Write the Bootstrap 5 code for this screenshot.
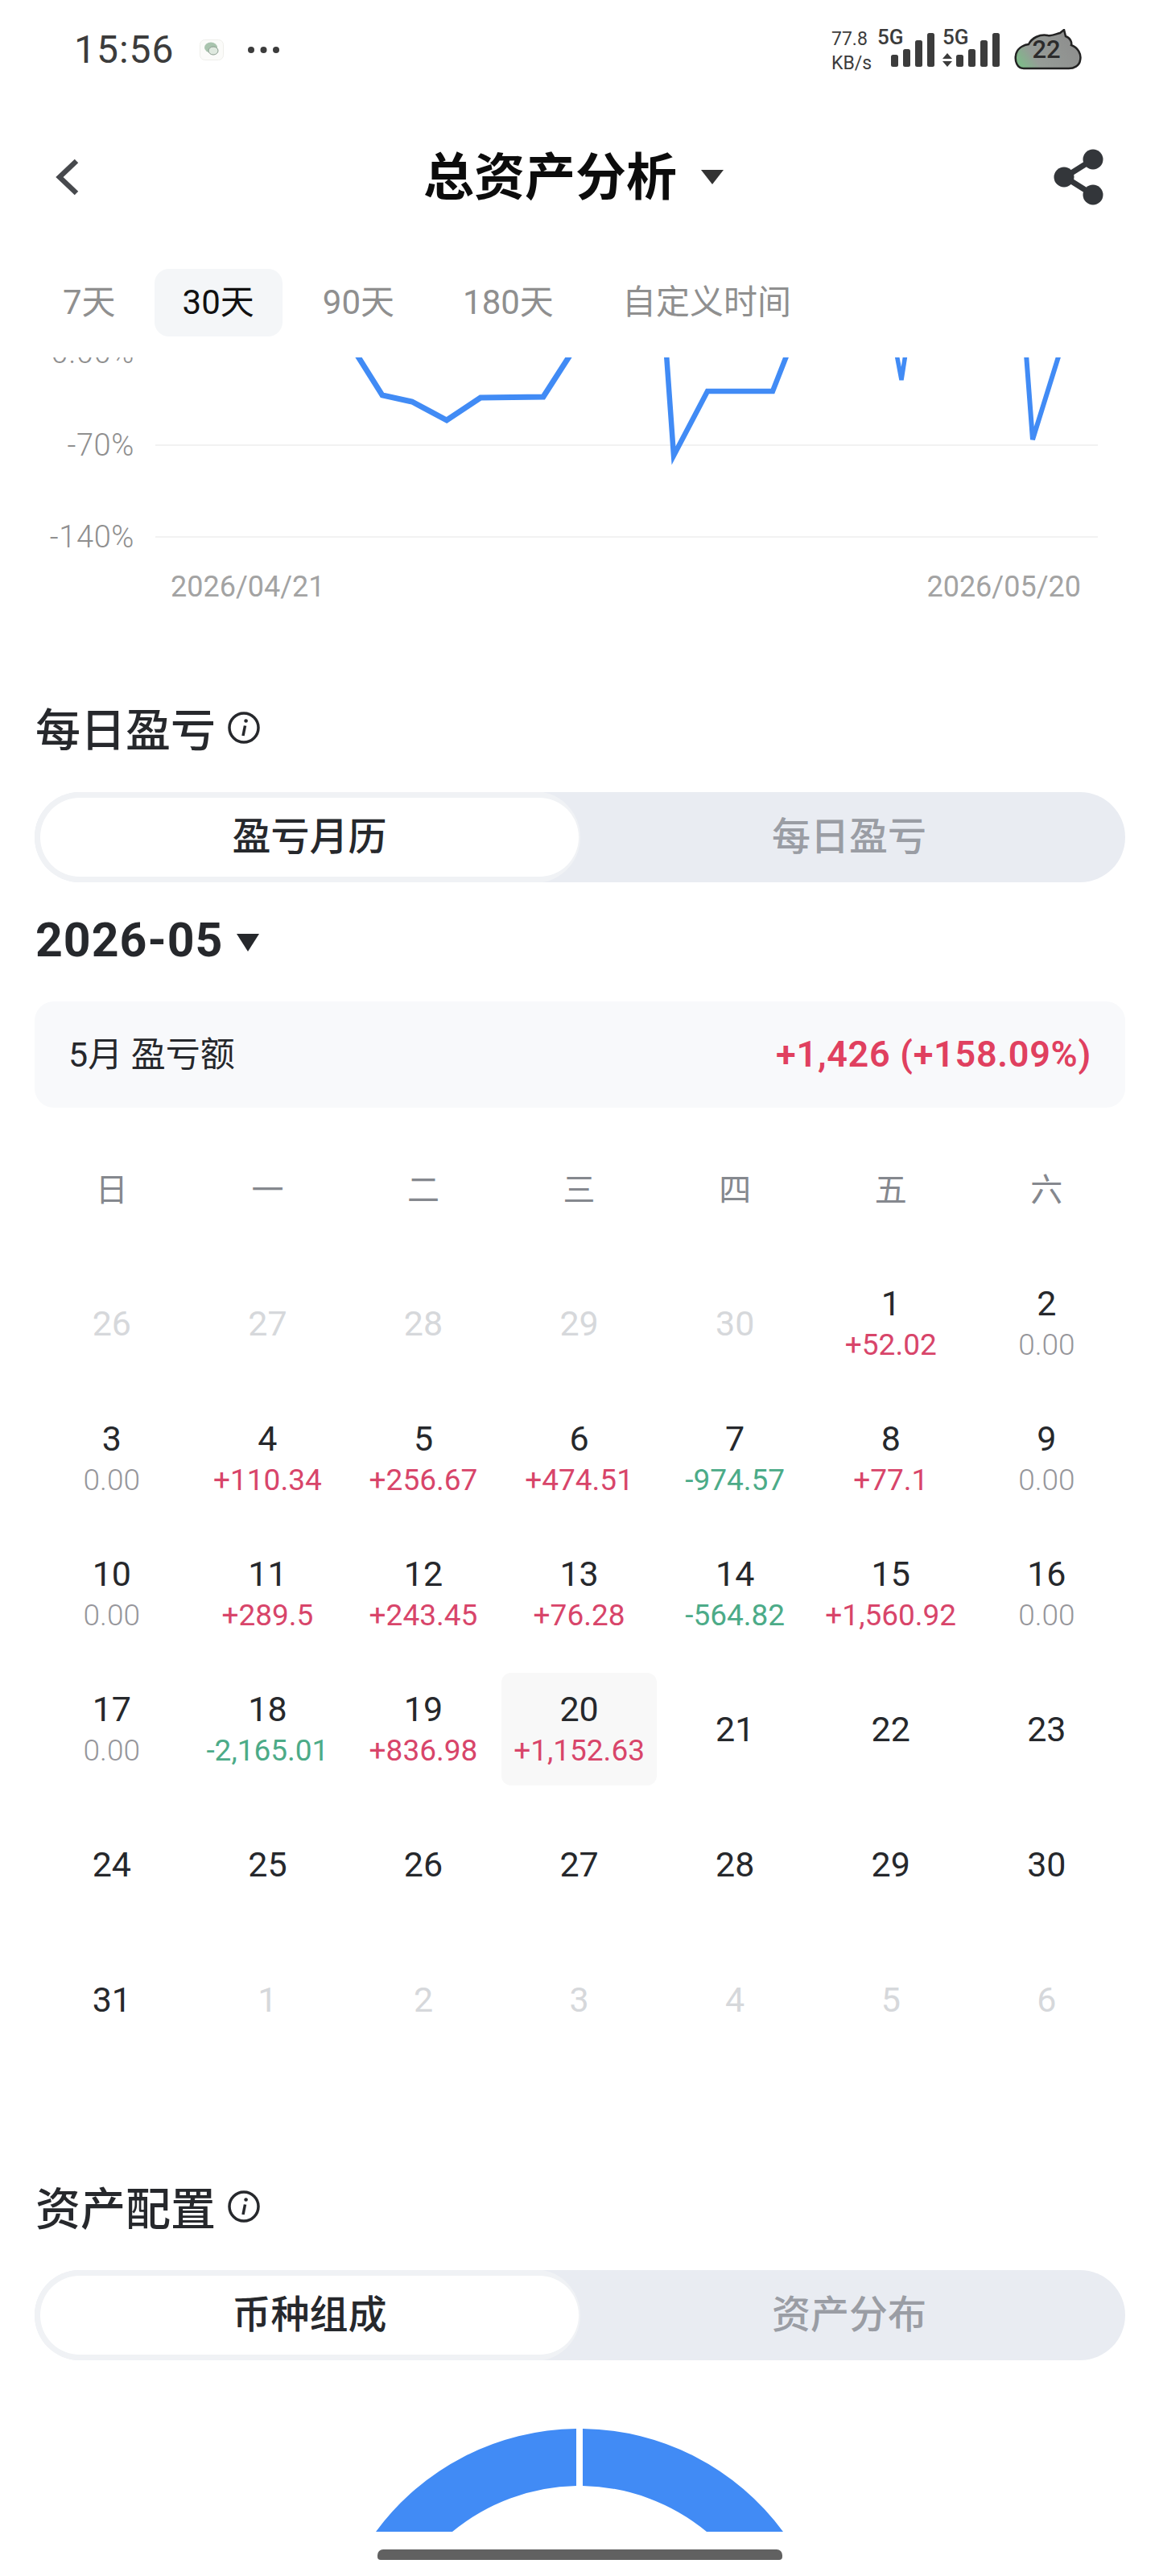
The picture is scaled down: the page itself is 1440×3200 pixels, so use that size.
<!DOCTYPE html>
<html lang="zh-CN">
<head>
    <meta charset="UTF-8">
    <meta name="viewport" content="width=device-width, initial-scale=1.0">
    <title>总资产分析</title>
    <link href="https://cdn.jsdelivr.net/npm/bootstrap@5.3.0/dist/css/bootstrap.min.css" rel="stylesheet">
    <style>
        body { font-family: Roboto, "Noto Sans CJK SC", sans-serif; color: #26282c; background: #fff; }
        .page-wrap { width: 1440px; height: 3200px; overflow: hidden; }
        .status-row { height: 124px; padding: 0 96px 0 92px; }
        .status-time { font-size: 48px; color: #3c3c3c; line-height: 1; letter-spacing: 1px; width: 156px; }
        .status-dots { width: 41px; margin-left: 29px; }
        .status-right { height: 52px; }
        .net-group { height: 46px; margin-top: 1px; }
        .net-speed { width: 57px; font-size: 23px; line-height: 30px; color: #3c3c3c; margin-top: -3px; }
        .net-g { width: 32px; font-size: 26px; font-weight: 500; line-height: 18px; color: #3c3c3c; }
        .net-bars { margin-left: -15px; }
        .net-arrows { width: 32px; }
        .head-row { height: 192px; padding: 0 66px 0 66px; }
        .head-title { font-size: 63px; font-weight: 700; color: #0c0c0c; line-height: 1; margin-left: 19px; margin-right: 30px; }
        .range-row { margin-top: 18px; height: 84px; padding-left: 43px; gap: 15px; }
        .range-item { padding: 0 35px; height: 84px; line-height: 84px; font-size: 42px; color: #8f8f8f; border-radius: 18px; white-space: nowrap; }
        .range-first { padding-right: 33px; }
        .range-on { background: #f4f6f8; color: #111; }
        .chart-box { margin-top: 26px; height: 429px; overflow: hidden; }
        .chart-label { font-size: 36px; fill: #a3a3a3; font-family: Roboto, sans-serif; }
        .chart-axis { font-size: 38px; letter-spacing: 0.6px; font-weight: 300; fill: #8f8f8f; }
        .sec-title { height: 70px; padding-left: 44px; font-size: 56px; line-height: 70px; font-weight: 500; gap: 14px; }
        .seg-track { margin: 41px 42px 0 43px; height: 112px; padding: 7px; border-radius: 56px; background: #e9ecf2; overflow: hidden; }
        .seg-on { flex: 0 0 669px; height: 98px; background: #fff; border-radius: 49px; box-shadow: -6px 0 0 8px #f0f2f5; line-height: 98px; font-size: 48px; font-weight: 500; text-align: center; color: #26282c; position: relative; }
        .seg-off { flex: 1 1 auto; line-height: 98px; font-size: 48px; font-weight: 500; text-align: center; color: #9a9da4; }
        .month-row { margin-top: 37px; height: 70px; padding-left: 44px; font-size: 59px; font-weight: 700; line-height: 70px; gap: 17px; letter-spacing: 1px; }
        .month-row svg { margin-top: 6px; }
        .sum-card { margin: 41px 42px 0 43px; height: 132px; padding: 0 42px; background: #f8f9fb; border-radius: 24px; font-size: 43px; }
        .sum-val { font-weight: 600; color: #e0405f; font-size: 45px; letter-spacing: 0.7px; }
        .cal-grid { grid-template-columns: repeat(7, 193.6px); margin-left: 42px; }
        .cal-week { margin-top: 73px; height: 60px; }
        .cal-week div { text-align: center; font-size: 40px; line-height: 60px; color: #85888e; }
        .cal-days { margin-top: 65px; row-gap: 28px; }
        .cal-cell { height: 140px; display: flex; flex-direction: column; justify-content: center; align-items: center; border-radius: 12px; }
        .cal-num { font-size: 43px; line-height: 50px; color: #26282c; }
        .cal-val { font-size: 37px; line-height: 50px; margin-top: 2px; margin-bottom: -2px; font-weight: 300; color: #96969b; white-space: nowrap; }
        .cal-dim .cal-num { color: #d6d8db; }
        .cal-today { background: #f8f8f8; }
        .val-up { color: #d8456a; font-weight: 400; }
        .val-down { color: #4cab88; font-weight: 400; }
        .sec-two { margin-top: 156px; }
        .seg-two { margin-top: 40px; }
        .donut-box { margin-top: 85px; height: 128px; }
        .home-bar { width: 503px; height: 13px; margin: 22px auto 0; background: #616161; border-radius: 7px 7px 4px 4px; }
    </style>
</head>
<body>
<div class="page-wrap">

    <!-- status bar -->
    <div class="status-row d-flex align-items-center">
        <div class="status-time">15:56</div>
        <svg width="30" height="26" viewBox="0 0 30 26">
            <rect x="0.5" y="0.5" width="29" height="25" rx="6" fill="#fbfbf9" stroke="#eeeeea"/>
            <ellipse cx="14" cy="10" rx="8" ry="6.5" fill="#a9c4ae"/>
            <ellipse cx="17" cy="14" rx="6" ry="5" fill="#dfe9df" stroke="#8b9d8f"/>
        </svg>
        <svg class="status-dots" width="41" height="10" viewBox="0 0 41 10">
            <circle cx="5" cy="5" r="4" fill="#3c3c3c"/><circle cx="20.5" cy="5" r="4" fill="#3c3c3c"/><circle cx="36" cy="5" r="4" fill="#3c3c3c"/>
        </svg>
        <div class="status-right ms-auto d-flex align-items-start">
            <div class="net-group d-flex">
                <div class="net-speed text-nowrap">77.8<br>KB/s</div>
                <div class="net-g">5G</div>
                <svg width="56" height="42" viewBox="0 0 56 42" class="align-self-end net-bars">
                    <rect x="0" y="27" width="9" height="15" rx="2.5" fill="#3c3c3c"/>
                    <rect x="15" y="20" width="9" height="22" rx="2.5" fill="#3c3c3c"/>
                    <rect x="30" y="9" width="9" height="33" rx="2.5" fill="#3c3c3c"/>
                    <rect x="45" y="0" width="9" height="42" rx="2.5" fill="#3c3c3c"/>
                </svg>
                <div class="net-arrows d-flex flex-column justify-content-between ms-2">
                    <div class="net-g">5G</div>
                    <svg width="12" height="17" viewBox="0 0 12 17"><path d="M6 0 12 7H0ZM6 17 0 10H12Z" fill="#3c3c3c"/></svg>
                </div>
                <svg width="56" height="42" viewBox="0 0 56 42" class="align-self-end net-bars">
                    <rect x="0" y="27" width="9" height="15" rx="2.5" fill="#3c3c3c"/>
                    <rect x="15" y="20" width="9" height="22" rx="2.5" fill="#3c3c3c"/>
                    <rect x="30" y="9" width="9" height="33" rx="2.5" fill="#3c3c3c"/>
                    <rect x="45" y="0" width="9" height="42" rx="2.5" fill="#3c3c3c"/>
                </svg>
            </div>
            <svg width="84" height="52" viewBox="0 0 84 52" class="ms-3">
                <defs>
                    <linearGradient id="cloudFill" x1="0" x2="1" y1="0.7" y2="0.3">
                        <stop offset="0" stop-color="#7fb98a"/><stop offset="0.25" stop-color="#969c97"/><stop offset="1" stop-color="#8d8d8d"/>
                    </linearGradient>
                </defs>
                <path d="M12 49C3 49 1 39 2 33C3 25 10 20 18 19C22 11 32 6 42 8C48 9 52 6 57 5L62 1L64 9C70 11 72 17 71 20C79 23 84 31 82 39C81 46 74 49 68 49Z" fill="url(#cloudFill)" stroke="#222" stroke-width="2.5"/>
                <text x="40" y="36" text-anchor="middle" font-size="31" font-weight="500" fill="#2b2b2b" font-family="Roboto, sans-serif">22</text>
            </svg>
        </div>
    </div>

    <!-- title bar -->
    <div class="head-row d-flex align-items-center justify-content-between">
        <svg width="32" height="46" viewBox="0 0 32 46"><path d="M29 3 8 23l21 20" fill="none" stroke="#47494d" stroke-width="6.5"/></svg>
        <div class="d-flex align-items-center">
            <div class="head-title">总资产分析</div>
            <svg width="28" height="18" viewBox="0 0 28 18"><path d="M0 0H28L14 18Z" fill="#333"/></svg>
        </div>
        <svg width="66" height="70" viewBox="0 0 66 70">
            <path d="M50 13 15 35l35 22" fill="none" stroke="#33363a" stroke-width="7"/>
            <circle cx="50" cy="13" r="12.5" fill="#33363a"/><circle cx="14" cy="35" r="12.5" fill="#33363a"/><circle cx="50" cy="57" r="12.5" fill="#33363a"/>
        </svg>
    </div>

    <!-- range tabs -->
    <div class="range-row d-flex">
        <div class="range-item range-first">7天</div>
        <div class="range-item range-on">30天</div>
        <div class="range-item">90天</div>
        <div class="range-item">180天</div>
        <div class="range-item">自定义时间</div>
    </div>

    <!-- chart, offset so y matches page y minus 444 -->
    <div class="chart-box">
        <svg width="1440" height="330" viewBox="0 444 1440 330">
            <line x1="193" y1="553" x2="1364" y2="553" stroke="#f2f2f2" stroke-width="2"/>
            <line x1="193" y1="667" x2="1364" y2="667" stroke="#f2f2f2" stroke-width="2"/>
            <text class="chart-label chart-axis" x="167" y="451" text-anchor="end">0.00%</text>
            <text class="chart-label chart-axis" x="167" y="566" text-anchor="end">-70%</text>
            <text class="chart-label chart-axis" x="167" y="680" text-anchor="end">-140%</text>
            <text class="chart-label" x="212" y="741">2026/04/21</text>
            <text class="chart-label" x="1343" y="741" text-anchor="end">2026/05/20</text>
            <g fill="none" stroke="#418bf5" stroke-width="7" stroke-linejoin="miter">
                <polyline points="443,440 475,491 512,499 555,522 597,494 675,493 709,440" />
                <polyline points="828,440 837,566 879,486 960,486 978,440" stroke-width="6.5"/>
                <polyline points="1114,440 1120,472 1125,440" stroke-width="5.5"/>
                <polyline points="1275,440 1283,546 1316,440" stroke-width="6"/>
            </g>
        </svg>
    </div>

    <!-- daily pnl -->
    <div class="sec-title d-flex align-items-center">
        <span>每日盈亏</span>
        <svg width="42" height="42" viewBox="0 0 42 42" class="mb-2">
            <circle cx="21" cy="21" r="18" fill="none" stroke="#26282c" stroke-width="3.5"/>
            <path d="M22.5 18.5 20 31" fill="none" stroke="#26282c" stroke-width="3.5"/>
            <circle cx="23.6" cy="12.5" r="2.3" fill="#26282c"/>
        </svg>
    </div>
    <div class="seg-track d-flex">
        <div class="seg-on">盈亏月历</div>
        <div class="seg-off">每日盈亏</div>
    </div>
    <div class="month-row d-flex align-items-center">
        <span>2026-05</span>
        <svg width="28" height="22" viewBox="0 0 28 22"><path d="M0 0H28L14 22Z" fill="#26282c"/></svg>
    </div>
    <div class="sum-card d-flex align-items-center justify-content-between">
        <span>5月 盈亏额</span>
        <span class="sum-val">+1,426 (+158.09%)</span>
    </div>

    <!-- calendar -->
    <div class="cal-grid cal-week d-grid">
        <div>日</div><div>一</div><div>二</div><div>三</div><div>四</div><div>五</div><div>六</div>
    </div>
    <div class="cal-grid cal-days d-grid">
        <div class="cal-cell cal-dim"><div class="cal-num">26</div></div>
        <div class="cal-cell cal-dim"><div class="cal-num">27</div></div>
        <div class="cal-cell cal-dim"><div class="cal-num">28</div></div>
        <div class="cal-cell cal-dim"><div class="cal-num">29</div></div>
        <div class="cal-cell cal-dim"><div class="cal-num">30</div></div>
        <div class="cal-cell"><div class="cal-num">1</div><div class="cal-val val-up">+52.02</div></div>
        <div class="cal-cell"><div class="cal-num">2</div><div class="cal-val">0.00</div></div>

        <div class="cal-cell"><div class="cal-num">3</div><div class="cal-val">0.00</div></div>
        <div class="cal-cell"><div class="cal-num">4</div><div class="cal-val val-up">+110.34</div></div>
        <div class="cal-cell"><div class="cal-num">5</div><div class="cal-val val-up">+256.67</div></div>
        <div class="cal-cell"><div class="cal-num">6</div><div class="cal-val val-up">+474.51</div></div>
        <div class="cal-cell"><div class="cal-num">7</div><div class="cal-val val-down">-974.57</div></div>
        <div class="cal-cell"><div class="cal-num">8</div><div class="cal-val val-up">+77.1</div></div>
        <div class="cal-cell"><div class="cal-num">9</div><div class="cal-val">0.00</div></div>

        <div class="cal-cell"><div class="cal-num">10</div><div class="cal-val">0.00</div></div>
        <div class="cal-cell"><div class="cal-num">11</div><div class="cal-val val-up">+289.5</div></div>
        <div class="cal-cell"><div class="cal-num">12</div><div class="cal-val val-up">+243.45</div></div>
        <div class="cal-cell"><div class="cal-num">13</div><div class="cal-val val-up">+76.28</div></div>
        <div class="cal-cell"><div class="cal-num">14</div><div class="cal-val val-down">-564.82</div></div>
        <div class="cal-cell"><div class="cal-num">15</div><div class="cal-val val-up">+1,560.92</div></div>
        <div class="cal-cell"><div class="cal-num">16</div><div class="cal-val">0.00</div></div>

        <div class="cal-cell"><div class="cal-num">17</div><div class="cal-val">0.00</div></div>
        <div class="cal-cell"><div class="cal-num">18</div><div class="cal-val val-down">-2,165.01</div></div>
        <div class="cal-cell"><div class="cal-num">19</div><div class="cal-val val-up">+836.98</div></div>
        <div class="cal-cell cal-today"><div class="cal-num">20</div><div class="cal-val val-up">+1,152.63</div></div>
        <div class="cal-cell"><div class="cal-num">21</div></div>
        <div class="cal-cell"><div class="cal-num">22</div></div>
        <div class="cal-cell"><div class="cal-num">23</div></div>

        <div class="cal-cell"><div class="cal-num">24</div></div>
        <div class="cal-cell"><div class="cal-num">25</div></div>
        <div class="cal-cell"><div class="cal-num">26</div></div>
        <div class="cal-cell"><div class="cal-num">27</div></div>
        <div class="cal-cell"><div class="cal-num">28</div></div>
        <div class="cal-cell"><div class="cal-num">29</div></div>
        <div class="cal-cell"><div class="cal-num">30</div></div>

        <div class="cal-cell"><div class="cal-num">31</div></div>
        <div class="cal-cell cal-dim"><div class="cal-num">1</div></div>
        <div class="cal-cell cal-dim"><div class="cal-num">2</div></div>
        <div class="cal-cell cal-dim"><div class="cal-num">3</div></div>
        <div class="cal-cell cal-dim"><div class="cal-num">4</div></div>
        <div class="cal-cell cal-dim"><div class="cal-num">5</div></div>
        <div class="cal-cell cal-dim"><div class="cal-num">6</div></div>
    </div>

    <!-- asset allocation -->
    <div class="sec-title sec-two d-flex align-items-center">
        <span>资产配置</span>
        <svg width="42" height="42" viewBox="0 0 42 42" class="mb-2">
            <circle cx="21" cy="21" r="18" fill="none" stroke="#26282c" stroke-width="3.5"/>
            <path d="M22.5 18.5 20 31" fill="none" stroke="#26282c" stroke-width="3.5"/>
            <circle cx="23.6" cy="12.5" r="2.3" fill="#26282c"/>
        </svg>
    </div>
    <div class="seg-track seg-two d-flex">
        <div class="seg-on">币种组成</div>
        <div class="seg-off">资产分布</div>
    </div>
    <div class="donut-box d-flex justify-content-center">
        <svg width="506" height="128" viewBox="467 3018 506 128">
            <path d="M467 3146A314 314 0 0 1 716 3018V3089A249 249 0 0 0 562 3146Z" fill="#418bf5"/>
            <path d="M973 3146A314 314 0 0 0 724 3018V3089A249 249 0 0 1 878 3146Z" fill="#418bf5"/>
        </svg>
    </div>
    <div class="home-bar"></div>

</div>
<script src="https://cdn.jsdelivr.net/npm/bootstrap@5.3.0/dist/js/bootstrap.bundle.min.js"></script>
</body>
</html>
